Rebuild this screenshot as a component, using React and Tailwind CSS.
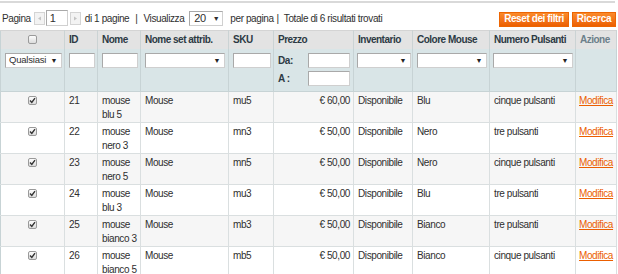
import React from "react";

const rows = [
  { id: 21, nome: ["mouse", "blu 5"], sku: "mu5", prezzo: "€ 60,00", colore: "Blu", pulsanti: "cinque pulsanti" },
  { id: 22, nome: ["mouse", "nero 3"], sku: "mn3", prezzo: "€ 50,00", colore: "Nero", pulsanti: "tre pulsanti" },
  { id: 23, nome: ["mouse", "nero 5"], sku: "mn5", prezzo: "€ 50,00", colore: "Nero", pulsanti: "cinque pulsanti" },
  { id: 24, nome: ["mouse", "blu 3"], sku: "mu3", prezzo: "€ 50,00", colore: "Blu", pulsanti: "tre pulsanti" },
  { id: 25, nome: ["mouse", "bianco 3"], sku: "mb3", prezzo: "€ 50,00", colore: "Bianco", pulsanti: "tre pulsanti" },
  { id: 26, nome: ["mouse", "bianco 5"], sku: "mb5", prezzo: "€ 50,00", colore: "Bianco", pulsanti: "cinque pulsanti" },
];

function Box({ w, h = "h-[15px]", children }) {
  return (
    <div className={`${w} ${h} bg-white border border-[#a9a9a9] border-r-[#cfcfcf] border-b-[#cfcfcf] flex items-center`}>
      {children}
    </div>
  );
}

function Select({ w, label }) {
  return (
    <Box w={w}>
      <span className="flex-1 pl-[3px] text-[9.5px] leading-none tracking-[-0.2px] whitespace-nowrap overflow-hidden">{label}</span>
      <span className="pr-[4px] text-[7px] leading-none text-[#222]">▼</span>
    </Box>
  );
}

function Check({ checked }) {
  return (
    <div className="w-[9px] h-[9px] rounded-[2px] border border-[#9a9a9a] bg-gradient-to-b from-[#fdfdfd] to-[#dcdcdc] flex items-center justify-center mx-auto">
      {checked && (
        <svg width="7" height="7" viewBox="0 0 7 7">
          <path d="M1 3.6 L2.8 5.4 L6 1.2" fill="none" stroke="#333" strokeWidth="1.4" />
        </svg>
      )}
    </div>
  );
}

function Arrow({ dir }) {
  return (
    <div className="w-[11px] h-[13px] border border-[#d4d4d4] bg-[#f3f3f3] flex items-center justify-center">
      <svg width="5" height="5" viewBox="0 0 5 5">
        {dir === "l" ? <path d="M4 0.5 L1 2.5 L4 4.5Z" fill="#c4c4c4" /> : <path d="M1 0.5 L4 2.5 L1 4.5Z" fill="#c4c4c4" />}
      </svg>
    </div>
  );
}

const th = "border-r border-[#cbd3d4] px-[4px] text-left font-bold text-[10px] tracking-[-0.5px] text-[#2d3a44] whitespace-nowrap";
const ftd = "border-r border-[#c7d3d5] align-top pt-[4px]";
const td = "border-r border-b border-[#dadfe0] align-top px-[4px] pt-[2px] leading-[14px] whitespace-nowrap";

export default function App() {
  return (
    <div className="w-[618px] h-[274px] overflow-hidden bg-white text-[#2f2f2f] text-[10px] tracking-[-0.4px]" style={{ fontFamily: '"Liberation Sans", Arial, sans-serif' }}>
      <div className="h-[2px] w-[615px] bg-[#d9d9d9] mt-[1px]"></div>
      <div className="flex items-center h-[27px]">
        <div className="flex items-center flex-1 pl-[2px] pt-[3px] whitespace-nowrap">
          <span>Pagina</span>
          <div className="ml-[3px]"><Arrow dir="l" /></div>
          <div className="ml-[1px] w-[22px] h-[16px] bg-white border border-[#a9a9a9] border-r-[#d0d0d0] border-b-[#d0d0d0] flex items-center pl-[3px] text-[11px]">1</div>
          <div className="ml-[2px]"><Arrow dir="r" /></div>
          <span className="ml-[4px]">di 1 pagine</span>
          <span className="ml-[6px]">|</span>
          <span className="ml-[6px]">Visualizza</span>
          <div className="ml-[5px] w-[34px] h-[15px] bg-white border border-[#a9a9a9] border-r-[#d0d0d0] border-b-[#d0d0d0] flex items-center">
            <span className="flex-1 pl-[4px] text-[11px] leading-none">20</span>
            <span className="pr-[3px] text-[7px] leading-none">▼</span>
          </div>
          <span className="ml-[7px]">per pagina</span>
          <span className="ml-[3px]">|</span>
          <span className="ml-[5px]">Totale di 6 risultati trovati</span>
        </div>
        <div className="flex items-center gap-[3px] pr-[2px] pt-[5px]">
          <button className="h-[15px] w-[70px] bg-gradient-to-b from-[#fa8a2a] to-[#ec5f00] border border-[#ed6502] text-white font-bold text-[10px] leading-none tracking-[-0.4px]">Reset dei filtri</button>
          <button className="h-[15px] w-[44px] bg-gradient-to-b from-[#fa8a2a] to-[#ec5f00] border border-[#ed6502] text-white font-bold text-[10px] leading-none tracking-[-0.2px]">Ricerca</button>
        </div>
      </div>
      <table className="table-fixed border-collapse w-[616px] border-l border-[#c7d3d5]">
        <colgroup>
          <col className="w-[64px]" />
          <col className="w-[33px]" />
          <col className="w-[43px]" />
          <col className="w-[88px]" />
          <col className="w-[45px]" />
          <col className="w-[80px]" />
          <col className="w-[59px]" />
          <col className="w-[77px]" />
          <col className="w-[86px]" />
          <col className="w-[41px]" />
        </colgroup>
        <thead>
          <tr className="h-[18px] bg-[#e3e3e3] border-t border-[#d4d4d4]">
            <th className={th}><Check /></th>
            <th className={th}>ID</th>
            <th className={th}>Nome</th>
            <th className={th}>Nome set attrib.</th>
            <th className={th}>SKU</th>
            <th className={th}>Prezzo</th>
            <th className={th}>Inventario</th>
            <th className={th}>Colore Mouse</th>
            <th className={th}>Numero Pulsanti</th>
            <th className={`${th} text-[#6c7f8a]`}>Azione</th>
          </tr>
          <tr className="h-[43px] bg-[#d9e5e7] border-b border-[#c7d3d5]">
            <td className={`${ftd} pl-[4px]`}><Select w="w-[57px]" label="Qualsiasi" /></td>
            <td className={`${ftd} pl-[4px]`}><Box w="w-[26px]" /></td>
            <td className={`${ftd} pl-[4px]`}><Box w="w-[36px]" /></td>
            <td className={`${ftd} pl-[4px]`}><Select w="w-[80px]" label="" /></td>
            <td className={`${ftd} pl-[4px]`}><Box w="w-[38px]" /></td>
            <td className={`${ftd} pl-[4px] pr-[3px]`}>
              <div className="flex items-center justify-between">
                <span className="font-bold text-[#2d3a44]">Da:</span>
                <Box w="w-[42px]" />
              </div>
              <div className="flex items-center justify-between mt-[3px]">
                <span className="font-bold text-[#2d3a44]">A :</span>
                <Box w="w-[42px]" />
              </div>
            </td>
            <td className={`${ftd} pl-[3px]`}><Select w="w-[54px]" label="" /></td>
            <td className={`${ftd} pl-[4px]`}><Select w="w-[70px]" label="" /></td>
            <td className={`${ftd} pl-[3px]`}><Select w="w-[80px]" label="" /></td>
            <td className={ftd}></td>
          </tr>
        </thead>
        <tbody>
          {rows.map((r, i) => (
            <tr key={r.id} className={`h-[30px] ${i % 2 === 0 ? "bg-[#f6f6f6]" : "bg-white"}`}>
              <td className={`${td} pt-[4px]`}><Check checked /></td>
              <td className={td}>{r.id}</td>
              <td className={`${td} overflow-visible`}>{r.nome[0]}<br />{r.nome[1]}</td>
              <td className={td}>Mouse</td>
              <td className={td}>{r.sku}</td>
              <td className={`${td} text-right pr-[3px]`}>{r.prezzo}</td>
              <td className={td}>Disponibile</td>
              <td className={td}>{r.colore}</td>
              <td className={td}>{r.pulsanti}</td>
              <td className={`${td} pl-[3px]`}>
                <a className="text-[#eb5e00] underline">Modifica</a>
              </td>
            </tr>
          ))}
        </tbody>
      </table>
    </div>
  );
}
